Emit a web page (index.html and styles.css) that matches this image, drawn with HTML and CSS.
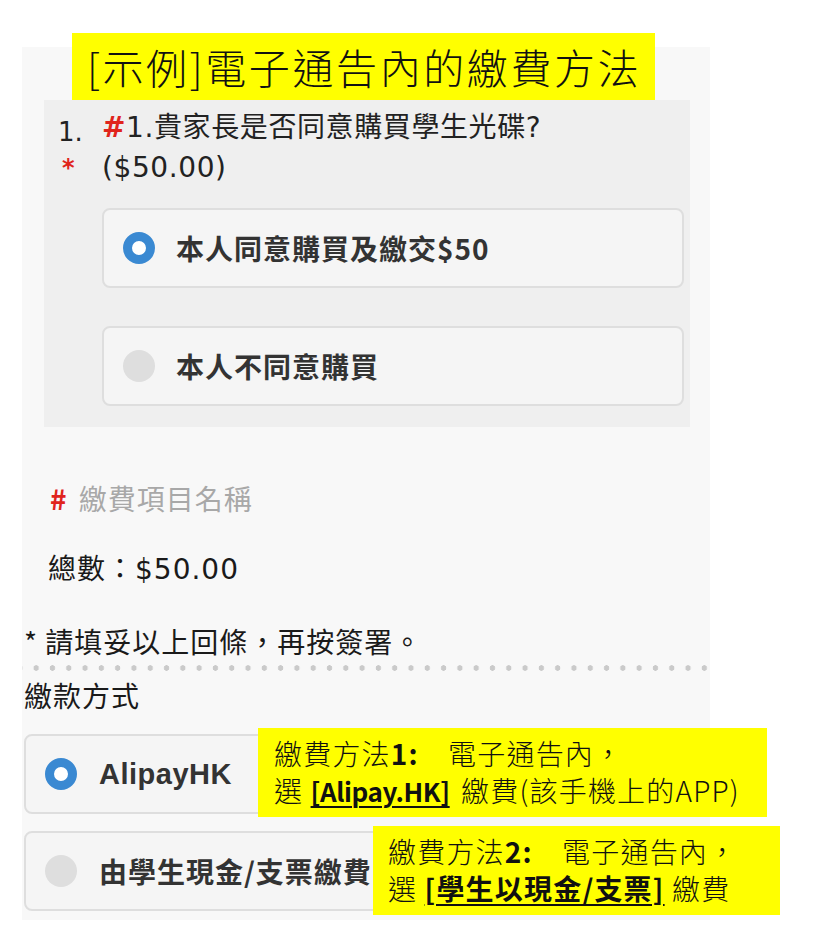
FILE: index.html
```html
<!DOCTYPE html>
<html lang="zh-Hant">
<head>
  <meta charset="UTF-8">
  <title>[示例]電子通告內的繳費方法</title>
  <link rel="stylesheet" href="styles.css">
</head>
<body>

  <div class="phone">

    <div class="question">
      <div class="q-num">
        <span>1.</span>
        <span class="req">*</span>
      </div>
      <div class="q-body">
        <p class="q-title"><span class="req">#</span>1.貴家長是否同意購買學生光碟?<br>($50.00)</p>

        <div class="option">
          <span class="radio checked"></span>
          <span class="opt-text">本人同意購買及繳交$50</span>
        </div>
        <div class="option">
          <span class="radio"></span>
          <span class="opt-text">本人不同意購買</span>
        </div>
      </div>
    </div>

    <p class="item-name"><span class="req">#</span> 繳費項目名稱</p>
    <p class="total">總數：<span class="num">$50.00</span></p>
    <p class="note">* 請填妥以上回條，再按簽署。</p>

    <div class="dots"></div>

    <p class="pay-label">繳款方式</p>

    <div class="pay-options">
      <div class="option pay">
        <span class="radio checked"></span>
        <span class="opt-text latin">AlipayHK</span>
      </div>
      <div class="option pay">
        <span class="radio"></span>
        <span class="opt-text">由學生現金/支票繳費</span>
      </div>
    </div>

  </div>

  <!-- yellow notes laid over the screenshot -->
  <div class="note-box title-box">[示例]電子通告內的繳費方法</div>

  <div class="note-box hint hint-1">
    <div>繳費方法<b>1:</b>　電子通告內，</div>
    <div>選 <u class="latin-link">[Alipay.HK]</u> 繳費(該手機上的APP)</div>
  </div>

  <div class="note-box hint hint-2">
    <div>繳費方法<b>2:</b>　電子通告內，</div>
    <div>選 <u>[學生以現金/支票]</u> 繳費</div>
  </div>

</body>
</html>
```

FILE: styles.css
```css
body {
  margin: 0;
  background: #fff;
  font-family: "Noto Sans CJK TC", "Noto Sans", sans-serif;
  color: #222;
  position: relative;
  width: 820px;
  height: 945px;
  overflow: hidden;
}

p {
  margin: 0;
}

.phone {
  margin: 47px 0 0 22px;
  width: 688px;
  height: 873px;
  background: #f8f8f8;
  display: flex;
  flex-direction: column;
  padding-top: 53px;
  box-sizing: border-box;
}

.req {
  color: #e0241c;
  font-weight: bold;
}

/* question block */
.question {
  background: #efefef;
  width: 646px;
  margin-left: 22px;
  display: flex;
  padding: 8px 6px 21px 14px;
  box-sizing: border-box;
}

.q-num {
  width: 44px;
  display: flex;
  flex-direction: column;
  font-family: "DejaVu Sans", sans-serif;
  font-size: 26px;
  line-height: 40px;
  padding-top: 4px;
}

.q-num .req {
  font-size: 24px;
  padding-left: 4px;
  line-height: 32px;
}

.q-body {
  flex: 1;
  display: flex;
  flex-direction: column;
  gap: 38px;
}

.q-title {
  font-family: "DejaVu Sans", "Noto Sans CJK TC", sans-serif;
  font-size: 28px;
  letter-spacing: 0.6px;
  line-height: 40px;
  margin-bottom: -18px;
  color: #222;
}

.option {
  height: 80px;
  box-sizing: border-box;
  background: #f5f5f5;
  border: 2px solid #dedede;
  border-radius: 8px;
  display: flex;
  align-items: center;
  padding-left: 19px;
  gap: 21px;
}

.radio {
  width: 32px;
  height: 32px;
  border-radius: 50%;
  background: #dedede;
  box-sizing: border-box;
  flex: none;
}

.radio.checked {
  background: #fff;
  border: 9px solid #3a89d2;
}

.opt-text {
  font-size: 28px;
  font-weight: bold;
  color: #333;
  letter-spacing: 1px;
}

.opt-text.latin {
  font-family: "Liberation Sans", sans-serif;
  font-size: 29px;
  letter-spacing: 0.5px;
}

/* summary lines */
.item-name,
.total,
.note,
.pay-label {
  font-size: 28px;
  letter-spacing: 1px;
  line-height: 40px;
}

.item-name {
  margin: 51px 0 0 28px;
  color: #a8a8a8;
}

.item-name .req {
  margin-right: 4px;
}

.total {
  margin: 29px 0 0 26px;
  color: #1a1a1a;
}

.total .num {
  font-family: "DejaVu Sans", sans-serif;
  font-size: 28px;
  letter-spacing: 1px;
}

.note {
  margin: 31px 0 0 2px;
  color: #1a1a1a;
}

.dots {
  height: 6px;
  margin-top: 4px;
  background-image: radial-gradient(circle, #cacaca 2.5px, transparent 3px);
  background-size: 16.3px 6px;
  background-position: 6px 0;
  background-repeat: repeat-x;
}

.pay-label {
  margin: 4px 0 0 2px;
  color: #1a1a1a;
}

.pay-options {
  display: flex;
  flex-direction: column;
  gap: 17px;
  margin: 19px 0 0 2px;
  width: 678px;
}

.option.pay {
  height: 80px;
  gap: 22px;
}

/* yellow annotation boxes */
.note-box {
  position: absolute;
  background: #ffff00;
  color: #111;
  font-weight: 300;
  box-sizing: border-box;
}

.title-box {
  left: 72px;
  top: 33px;
  width: 583px;
  height: 67px;
  font-size: 41px;
  line-height: 67px;
  padding-left: 15px;
  letter-spacing: 2.6px;
  white-space: nowrap;
}

.hint {
  font-size: 28px;
  letter-spacing: 1.2px;
  line-height: 37px;
  padding: 7px 0 0 16px;
  white-space: nowrap;
}

.hint b,
.hint u {
  font-weight: 700;
}

.hint u {
  text-decoration-thickness: 2px;
  text-underline-offset: 4px;
}

.hint u.latin-link {
  font-size: 26px;
  letter-spacing: -0.4px;
  margin-right: 4px;
}

.hint-1 {
  left: 258px;
  top: 728px;
  width: 509px;
  height: 89px;
}

.hint-2 {
  left: 373px;
  top: 826px;
  width: 407px;
  height: 89px;
  padding-left: 15px;
}
```
